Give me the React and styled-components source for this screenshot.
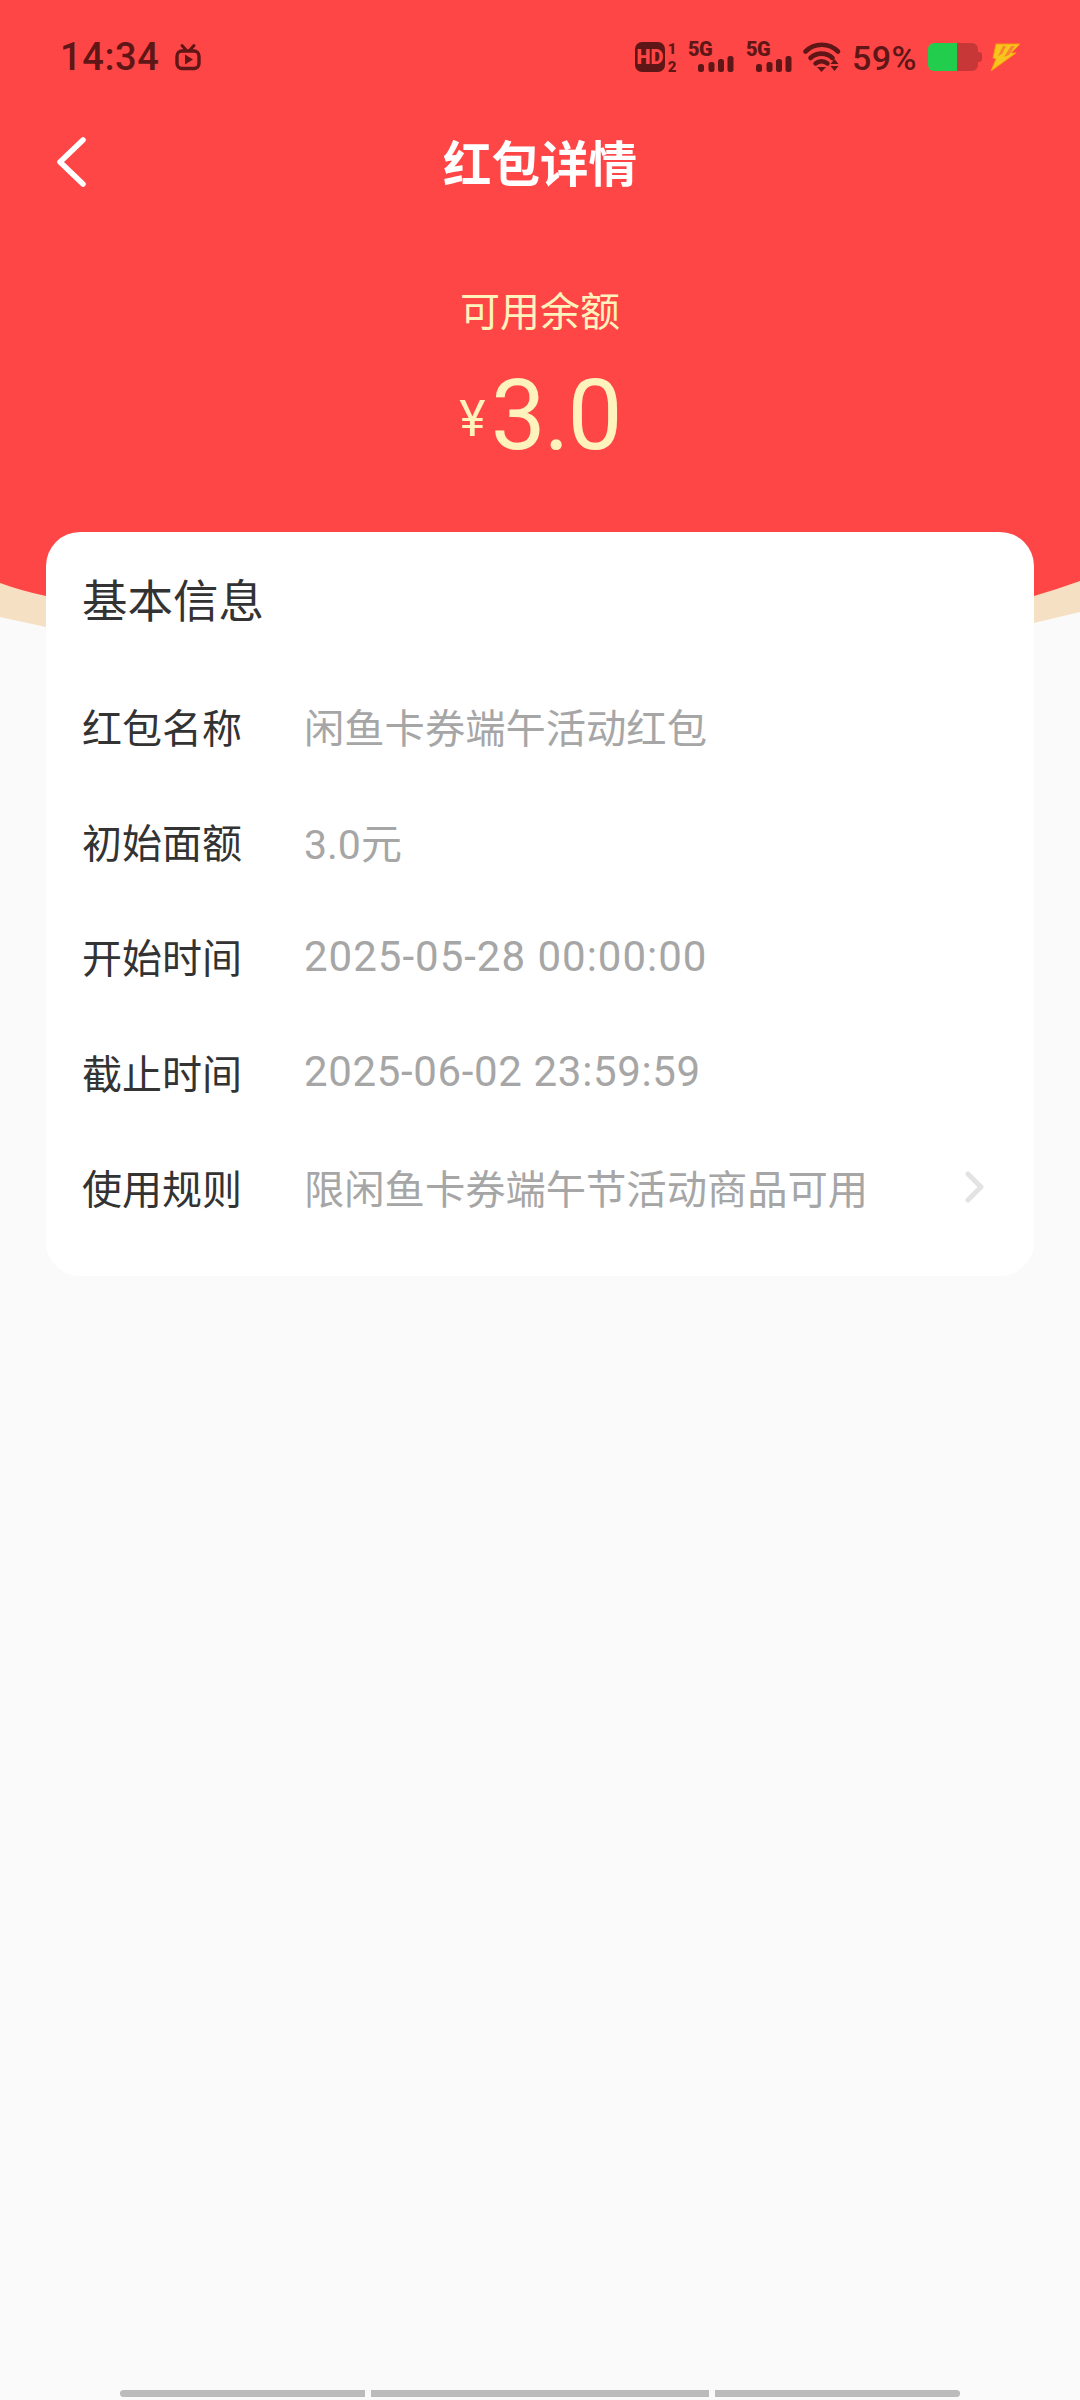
import React from "react";
import styled, { createGlobalStyle } from "styled-components";

const CJK = `"Noto Sans CJK SC", "Roboto", sans-serif`;
const LATIN = `"Roboto", "Noto Sans CJK SC", sans-serif`;
const DARK = "#5e1616";

const Global = createGlobalStyle`
  html, body { margin: 0; padding: 0; background: #fafafa; }
  #root { width: 1080px; }
`;

const Page = styled.div`
  position: relative;
  width: 1080px;
  height: 2400px;
  overflow: hidden;
  display: flex;
  flex-direction: column;
  background: #fafafa;
  font-family: ${CJK};
`;

const Hero = styled.header`
  height: 532px;
  flex: none;
  display: flex;
  flex-direction: column;
  background: #ff4646;
`;

const Wave = styled.svg`
  position: absolute;
  left: 0;
  top: 532px;
  display: block;
`;

const StatusBar = styled.div`
  box-sizing: content-box;
  height: 30px;
  padding: 42px 60px 0 60px;
  display: flex;
  align-items: center;
  color: ${DARK};
`;

const Clock = styled.span`
  font-family: "Roboto", sans-serif;
  font-weight: 500;
  font-size: 38px;
  line-height: 30px;
  letter-spacing: 0.6px;
`;

const Spacer = styled.div`
  flex: 1;
`;

const Percent = styled.span`
  font-family: "Roboto", sans-serif;
  font-weight: 500;
  font-size: 34px;
  line-height: 30px;
  margin: 2px 11px 0 11px;
  letter-spacing: 0.4px;
`;

const StatusIcon = styled.svg`
  display: block;
  flex: none;
  overflow: visible;
  margin-left: ${(p) => p.$ml || 0}px;
`;

const IconText = styled.text`
  font-family: "Roboto", sans-serif;
  font-weight: 900;
  fill: ${(p) => p.$fill || DARK};
`;

const NavBar = styled.nav`
  display: flex;
  align-items: center;
  justify-content: center;
  position: relative;
  height: 60px;
  margin-top: 59px;
`;

const BackIcon = styled.svg`
  position: absolute;
  left: 55px;
  top: 5px;
`;

const Title = styled.h1`
  margin: 0;
  font-size: 48.5px;
  font-weight: 700;
  line-height: 60px;
  color: #fff;
`;

const Balance = styled.div`
  display: flex;
  flex-direction: column;
  align-items: center;
  margin-top: 93px;
  color: #fff3bd;
`;

const BalanceLabel = styled.div`
  font-size: 40px;
  line-height: 50px;
`;

const Amount = styled.div`
  display: flex;
  align-items: center;
  margin-top: 32px;
  line-height: 100px;
  font-family: "Roboto", sans-serif;
`;

const Currency = styled.span`
  font-size: 50px;
  line-height: 50px;
  margin: 6px 5px 0 0;
`;

const AmountValue = styled.span`
  font-size: 98px;
  font-weight: 400;
  letter-spacing: -2px;
`;

const Card = styled.section`
  position: relative;
  flex: none;
  box-sizing: border-box;
  width: 988px;
  height: 744px;
  margin: 0 46px;
  padding: 32px 36px 0;
  background: #fff;
  border-radius: 34px;
`;

const CardTitle = styled.h2`
  margin: 0 0 36px;
  font-size: 45.5px;
  font-weight: 400;
  line-height: 68px;
  color: #333;
`;

const Row = styled.div`
  display: flex;
  align-items: center;
  height: 115.3px;
  font-size: 40px;
`;

const Label = styled.span`
  width: 222px;
  flex: none;
  color: #333;
`;

const Value = styled.span`
  flex: 1;
  color: #a6a6a6;
  white-space: nowrap;
  font-family: ${(p) => (p.$kind === "cjk" ? CJK : LATIN)};
  font-size: ${(p) => (p.$kind === "date" ? 42 : p.$kind === "amount" ? 41 : 40.3)}px;
  letter-spacing: ${(p) => p.$tracking || 0}px;
`;

const Chevron = styled.svg`
  flex: none;
  margin-right: 12px;
`;

const GestureBar = styled.div`
  display: flex;
  gap: 6px;
  margin: auto 120px 3px;
`;

const Segment = styled.div`
  height: 7px;
  flex: ${(p) => p.$grow} 0 0;
  background: #bbbbbb;
  border-radius: ${(p) => p.$radius};
`;

const Tv = () => (
  <StatusIcon $ml={16} width="26" height="26" viewBox="0 0 26 26">
    <path d="M7 1.5 L11 6 M19 1.5 L15 6" stroke={DARK} strokeWidth="3" strokeLinecap="round" fill="none" />
    <rect x="2" y="7" width="22" height="17.5" rx="5" fill="none" stroke={DARK} strokeWidth="3.4" />
    <path d="M10 10.5 L18 15.5 L10 20.5 Z" fill={DARK} />
  </StatusIcon>
);

const Hd = () => (
  <StatusIcon width="44" height="32" viewBox="0 0 44 32">
    <rect x="0" y="1" width="30" height="30" rx="7" fill={DARK} />
    <IconText x="15" y="23" textAnchor="middle" fontSize="20" $fill="#ff4646">HD</IconText>
    <IconText x="37" y="13" textAnchor="middle" fontSize="15">1</IconText>
    <IconText x="37" y="31" textAnchor="middle" fontSize="15">2</IconText>
  </StatusIcon>
);

const Signal = ({ ml }) => (
  <StatusIcon $ml={ml} width="46" height="32" viewBox="0 0 46 32">
    <IconText x="0" y="15" fontSize="20" letterSpacing="-0.5">5G</IconText>
    {[
      [10, 8],
      [20.5, 10],
      [30, 13],
      [39.5, 16],
    ].map(([x, h]) => (
      <rect key={x} x={x} y={31 - h} width="6" height={h} rx="2.5" fill={DARK} />
    ))}
  </StatusIcon>
);

const Wifi = () => (
  <StatusIcon $ml={11} width="38" height="30" viewBox="0 0 38 30">
    <path d="M2.5 9.5 A 23 23 0 0 1 35 9.5" fill="none" stroke={DARK} strokeWidth="4.6" strokeLinecap="round" />
    <path d="M7.5 16 A 16 16 0 0 1 29.5 16" fill="none" stroke={DARK} strokeWidth="4.6" strokeLinecap="round" />
    <path d="M12.5 21.5 A 9 9 0 0 1 24.5 21.5" fill="none" stroke={DARK} strokeWidth="4.4" strokeLinecap="round" />
    <path d="M14 25 L23 25 L18.5 30 Z" fill={DARK} />
    <path d="M31.5 17 L35.5 22 L27.5 22 Z M27.5 24 L35.5 24 L31.5 29 Z" fill={DARK} />
  </StatusIcon>
);

const Battery = () => (
  <StatusIcon width="54" height="28" viewBox="0 0 54 28">
    <path d="M29 0 H44 a6 6 0 0 1 6 6 V9 h1 a3 3 0 0 1 3 3 v4 a3 3 0 0 1 -3 3 h-1 V22 a6 6 0 0 1 -6 6 H29 Z" fill="#c73737" />
    <path d="M6 0 H29 V28 H6 a6 6 0 0 1 -6 -6 V6 a6 6 0 0 1 6 -6 Z" fill="#22cc4c" />
  </StatusIcon>
);

const Bolt = () => (
  <StatusIcon $ml={8} width="30" height="28" viewBox="0 0 30 28">
    <path d="M6 1 H30 L21 10 L26 10 L1 28 L6 16 L3 15 Z" fill="#f7c51c" stroke="#f59a0c" strokeWidth="1" strokeLinejoin="round" />
    <path d="M13 3 L8 13 L12 11 L16 3 Z M21 3 L14 14 L19 12 L25 3 Z" fill="#ff6a3a" opacity="0.75" />
  </StatusIcon>
);

const rows = [
  { label: "红包名称", value: "闲鱼卡券端午活动红包", kind: "cjk" },
  { label: "初始面额", value: "3.0元", kind: "amount" },
  { label: "开始时间", value: "2025-05-28 00:00:00", kind: "date", tracking: 1 },
  { label: "截止时间", value: "2025-06-02 23:59:59", kind: "date", tracking: 0.65 },
  { label: "使用规则", value: "限闲鱼卡券端午节活动商品可用", kind: "cjk", more: true },
];

export default function App() {
  return (
    <Page>
      <Global />
      <Hero>
        <StatusBar>
          <Clock>14:34</Clock>
          <Tv />
          <Spacer />
          <Hd />
          <Signal ml={9} />
          <Signal ml={12} />
          <Wifi />
          <Percent>59%</Percent>
          <Battery />
          <Bolt />
        </StatusBar>
        <NavBar>
          <BackIcon width="34" height="52" viewBox="0 0 34 52">
            <path d="M28 4 L5 26 L28 48" fill="none" stroke="#fff" strokeWidth="5.5" strokeLinecap="round" strokeLinejoin="round" />
          </BackIcon>
          <Title>红包详情</Title>
        </NavBar>
        <Balance>
          <BalanceLabel>可用余额</BalanceLabel>
          <Amount>
            <Currency>¥</Currency>
            <AmountValue>3.0</AmountValue>
          </Amount>
        </Balance>
      </Hero>
      <Wave width="1080" height="100" viewBox="0 532 1080 100">
        <path d="M0 532 H1080 V612 L1034 623 H46 V627 L0 617 Z" fill="#f5e0c3" />
        <path d="M0 532 H1080 V581 Q1058 589 1034 596 H46 Q22 591 0 583 Z" fill="#ff4646" />
      </Wave>
      <Card>
        <CardTitle>基本信息</CardTitle>
        {rows.map((r) => (
          <Row key={r.label}>
            <Label>{r.label}</Label>
            <Value $kind={r.kind} $tracking={r.tracking}>{r.value}</Value>
            {r.more && (
              <Chevron width="22" height="32" viewBox="0 0 22 32">
                <path d="M4 3 L17 16 L4 29" fill="none" stroke="#e3e3e3" strokeWidth="5" strokeLinecap="round" strokeLinejoin="round" />
              </Chevron>
            )}
          </Row>
        ))}
      </Card>
      <GestureBar>
        <Segment $grow={245} $radius="4px 0 0 4px" />
        <Segment $grow={338} $radius="0" />
        <Segment $grow={245} $radius="0 4px 4px 0" />
      </GestureBar>
    </Page>
  );
}
